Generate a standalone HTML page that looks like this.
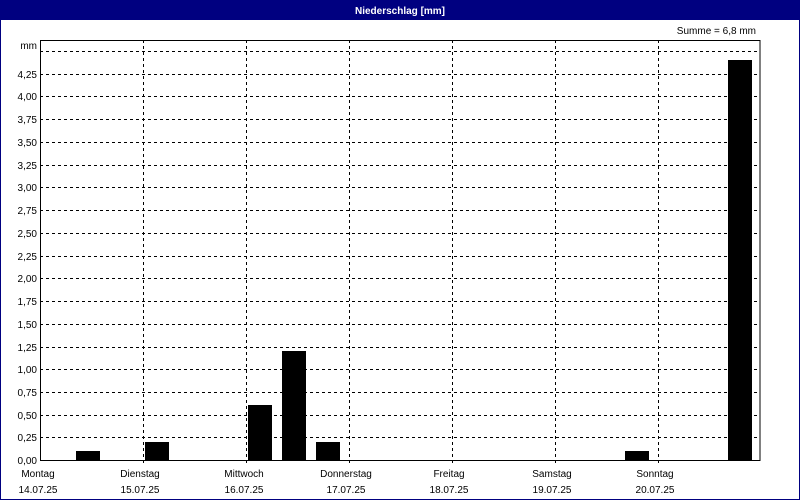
<!DOCTYPE html>
<html><head><meta charset="utf-8"><style>
html,body{margin:0;padding:0;background:#fff;}
svg{display:block;font-family:"Liberation Sans",sans-serif;font-size:10px;}
</style></head><body>
<svg width="800" height="500" xmlns="http://www.w3.org/2000/svg">
<rect x="0" y="0" width="800" height="500" fill="#fff"/>
<rect x="0" y="0" width="800" height="20" fill="#000080"/>
<rect x="0.5" y="0.5" width="799" height="499" fill="none" stroke="#000080"/>
<text x="400" y="14" fill="#fff" font-weight="bold" text-anchor="middle">Niederschlag [mm]</text>
<text x="756" y="34" fill="#000" text-anchor="end">Summe = 6,8 mm</text>
<text x="37" y="49" text-anchor="end">mm</text>
<g stroke="#000" stroke-dasharray="3,3" stroke-width="1">
<line x1="40" y1="51.5" x2="760" y2="51.5"/>
<line x1="40" y1="74.5" x2="760" y2="74.5"/>
<line x1="40" y1="96.5" x2="760" y2="96.5"/>
<line x1="40" y1="119.5" x2="760" y2="119.5"/>
<line x1="40" y1="142.5" x2="760" y2="142.5"/>
<line x1="40" y1="165.5" x2="760" y2="165.5"/>
<line x1="40" y1="187.5" x2="760" y2="187.5"/>
<line x1="40" y1="210.5" x2="760" y2="210.5"/>
<line x1="40" y1="233.5" x2="760" y2="233.5"/>
<line x1="40" y1="256.5" x2="760" y2="256.5"/>
<line x1="40" y1="278.5" x2="760" y2="278.5"/>
<line x1="40" y1="301.5" x2="760" y2="301.5"/>
<line x1="40" y1="324.5" x2="760" y2="324.5"/>
<line x1="40" y1="347.5" x2="760" y2="347.5"/>
<line x1="40" y1="369.5" x2="760" y2="369.5"/>
<line x1="40" y1="392.5" x2="760" y2="392.5"/>
<line x1="40" y1="415.5" x2="760" y2="415.5"/>
<line x1="40" y1="437.5" x2="760" y2="437.5"/>
<line x1="143.5" y1="40" x2="143.5" y2="466"/>
<line x1="246.5" y1="40" x2="246.5" y2="466"/>
<line x1="349.5" y1="40" x2="349.5" y2="466"/>
<line x1="452.5" y1="40" x2="452.5" y2="466"/>
<line x1="555.5" y1="40" x2="555.5" y2="466"/>
<line x1="658.5" y1="40" x2="658.5" y2="466"/>
</g>
<g fill="#000">
<rect x="76" y="451" width="24" height="9"/>
<rect x="145" y="442" width="24" height="18"/>
<rect x="248" y="405" width="24" height="55"/>
<rect x="282" y="351" width="24" height="109"/>
<rect x="316" y="442" width="24" height="18"/>
<rect x="625" y="451" width="24" height="9"/>
<rect x="728" y="60" width="24" height="400"/>
</g>
<rect x="40.5" y="40.5" width="719.5" height="420" fill="none" stroke="#000"/>
<g text-anchor="end">
<text x="37" y="78">4,25</text><text x="37" y="100">4,00</text><text x="37" y="123">3,75</text>
<text x="37" y="146">3,50</text><text x="37" y="169">3,25</text><text x="37" y="191">3,00</text>
<text x="37" y="214">2,75</text><text x="37" y="237">2,50</text><text x="37" y="260">2,25</text>
<text x="37" y="282">2,00</text><text x="37" y="305">1,75</text><text x="37" y="328">1,50</text>
<text x="37" y="351">1,25</text><text x="37" y="373">1,00</text><text x="37" y="396">0,75</text>
<text x="37" y="419">0,50</text><text x="37" y="441">0,25</text><text x="37" y="464">0,00</text>
</g>
<g text-anchor="middle">
<text x="38" y="477">Montag</text><text x="38" y="493">14.07.25</text>
<text x="140" y="477">Dienstag</text><text x="140" y="493">15.07.25</text>
<text x="244" y="477">Mittwoch</text><text x="244" y="493">16.07.25</text>
<text x="346" y="477">Donnerstag</text><text x="346" y="493">17.07.25</text>
<text x="449" y="477">Freitag</text><text x="449" y="493">18.07.25</text>
<text x="552" y="477">Samstag</text><text x="552" y="493">19.07.25</text>
<text x="655" y="477">Sonntag</text><text x="655" y="493">20.07.25</text>
</g>
</svg>
</body></html>
